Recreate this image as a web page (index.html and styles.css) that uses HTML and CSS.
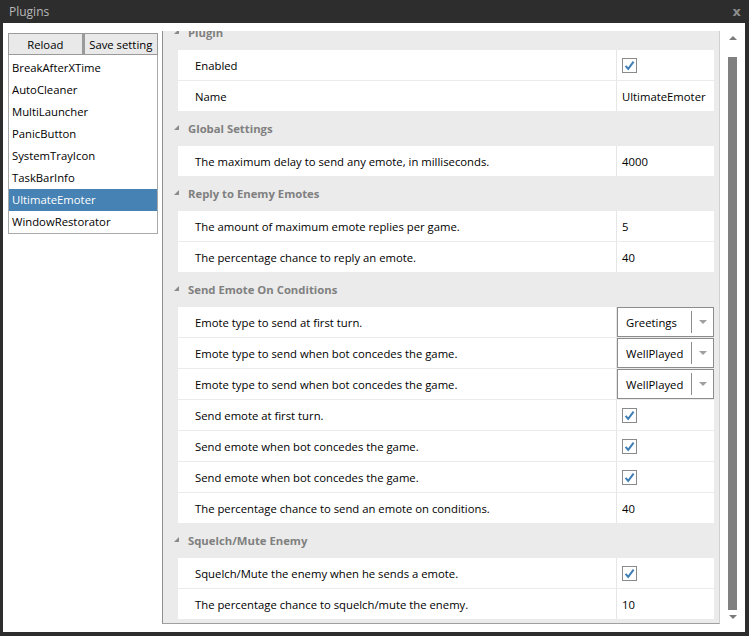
FILE: index.html
```html
<!DOCTYPE html>
<html>
<head>
<meta charset="utf-8">
<link rel="stylesheet" href="styles.css">
</head>
<body>
<div class="window">
  <div class="titlebar">
    <span class="title">Plugins</span>
    <span class="close">x</span>
  </div>
  <div class="client">
    <div class="sidebar">
      <div class="plugin-box">
        <div class="btn-row">
          <button class="btn">Reload</button>
          <button class="btn">Save setting</button>
        </div>
        <ul class="plugin-list">
          <li>BreakAfterXTime</li>
          <li>AutoCleaner</li>
          <li>MultiLauncher</li>
          <li>PanicButton</li>
          <li>SystemTrayIcon</li>
          <li>TaskBarInfo</li>
          <li class="selected">UltimateEmoter</li>
          <li>WindowRestorator</li>
        </ul>
      </div>
    </div>

    <div class="grid">
      <div class="grid-content">
        <div class="group-header"><span class="tri"></span>Plugin</div>
        <div class="rows">
          <div class="prop"><div class="label">Enabled</div><div class="value"><span class="check"><svg viewBox="0 0 15 15" width="15" height="15"><rect x="0.5" y="0.5" width="14" height="14" fill="#fff" stroke="#8a8a8a"/><path d="M3.6 7.8 L6.2 10.8 L11.6 3.6" fill="none" stroke="#3f7fb5" stroke-width="2"/></svg></span></div></div>
          <div class="prop"><div class="label">Name</div><div class="value">UltimateEmoter</div></div>
        </div>

        <div class="group-header"><span class="tri"></span>Global Settings</div>
        <div class="rows">
          <div class="prop"><div class="label">The maximum delay to send any emote, in milliseconds.</div><div class="value">4000</div></div>
        </div>

        <div class="group-header"><span class="tri"></span>Reply to Enemy Emotes</div>
        <div class="rows">
          <div class="prop"><div class="label">The amount of maximum emote replies per game.</div><div class="value">5</div></div>
          <div class="prop"><div class="label">The percentage chance to reply an emote.</div><div class="value">40</div></div>
        </div>

        <div class="group-header"><span class="tri"></span>Send Emote On Conditions</div>
        <div class="rows">
          <div class="prop"><div class="label">Emote type to send at first turn.</div><div class="value dd-cell"><div class="dropdown"><span class="dd-text">Greetings</span><span class="dd-btn"><span class="dd-arrow"></span></span></div></div></div>
          <div class="prop"><div class="label">Emote type to send when bot concedes the game.</div><div class="value dd-cell"><div class="dropdown"><span class="dd-text">WellPlayed</span><span class="dd-btn"><span class="dd-arrow"></span></span></div></div></div>
          <div class="prop"><div class="label">Emote type to send when bot concedes the game.</div><div class="value dd-cell"><div class="dropdown"><span class="dd-text">WellPlayed</span><span class="dd-btn"><span class="dd-arrow"></span></span></div></div></div>
          <div class="prop"><div class="label">Send emote at first turn.</div><div class="value"><span class="check"><svg viewBox="0 0 15 15" width="15" height="15"><rect x="0.5" y="0.5" width="14" height="14" fill="#fff" stroke="#8a8a8a"/><path d="M3.6 7.8 L6.2 10.8 L11.6 3.6" fill="none" stroke="#3f7fb5" stroke-width="2"/></svg></span></div></div>
          <div class="prop"><div class="label">Send emote when bot concedes the game.</div><div class="value"><span class="check"><svg viewBox="0 0 15 15" width="15" height="15"><rect x="0.5" y="0.5" width="14" height="14" fill="#fff" stroke="#8a8a8a"/><path d="M3.6 7.8 L6.2 10.8 L11.6 3.6" fill="none" stroke="#3f7fb5" stroke-width="2"/></svg></span></div></div>
          <div class="prop"><div class="label">Send emote when bot concedes the game.</div><div class="value"><span class="check"><svg viewBox="0 0 15 15" width="15" height="15"><rect x="0.5" y="0.5" width="14" height="14" fill="#fff" stroke="#8a8a8a"/><path d="M3.6 7.8 L6.2 10.8 L11.6 3.6" fill="none" stroke="#3f7fb5" stroke-width="2"/></svg></span></div></div>
          <div class="prop"><div class="label">The percentage chance to send an emote on conditions.</div><div class="value">40</div></div>
        </div>

        <div class="group-header"><span class="tri"></span>Squelch/Mute Enemy</div>
        <div class="rows">
          <div class="prop"><div class="label">Squelch/Mute the enemy when he sends a emote.</div><div class="value"><span class="check"><svg viewBox="0 0 15 15" width="15" height="15"><rect x="0.5" y="0.5" width="14" height="14" fill="#fff" stroke="#8a8a8a"/><path d="M3.6 7.8 L6.2 10.8 L11.6 3.6" fill="none" stroke="#3f7fb5" stroke-width="2"/></svg></span></div></div>
          <div class="prop"><div class="label">The percentage chance to squelch/mute the enemy.</div><div class="value">10</div></div>
        </div>
      </div>
    </div>

    <div class="vscroll">
      <span class="arrow-up"></span>
      <div class="thumb"></div>
      <span class="arrow-down"></span>
    </div>
  </div>
</div>
</body>
</html>
```

FILE: styles.css
```css
* { box-sizing: border-box; }
html, body { margin: 0; padding: 0; }
body {
  width: 749px;
  height: 636px;
  background: #2d2d2d;
  font-family: "Open Sans", "Noto Sans", sans-serif;
  font-size: 11.3px;
  color: #000;
  overflow: hidden;
}
.window {
  width: 749px;
  height: 636px;
  display: flex;
  flex-direction: column;
  background: #2d2d2d;
}
.titlebar {
  height: 23px;
  display: flex;
  align-items: center;
  justify-content: space-between;
  padding: 0 8px 0 9px;
}
.title {
  color: #b9b9b9;
  font-size: 12px;
}
.close {
  color: #8e8e8e;
  font-family: "DejaVu Sans", sans-serif;
  font-weight: bold;
  font-size: 13px;
  line-height: 1;
}
.client {
  height: 609px;
  margin: 0 4px 0 3px;
  background: #fff;
  display: flex;
  padding: 8px 0 8px 5px;
}
.sidebar {
  width: 150px;
  margin-top: 2px;
  margin-right: 4px;
  flex: none;
}
.plugin-box {
  border: 1px solid #a9a9a9;
  border-top: none;
}
.btn-row {
  display: flex;
  height: 22px;
  margin: 0 -1px;
}
.btn {
  flex: 1;
  height: 22px;
  margin: 0;
  padding: 0;
  border: 1px solid #9a9a9a;
  background: #e9e9e9;
  font-family: inherit;
  font-size: 11.3px;
  color: #000;
}
.btn + .btn { border-left-width: 2px; }
.plugin-list {
  list-style: none;
  margin: 0;
  padding: 2px 0 0;
}
.plugin-list li {
  height: 22px;
  line-height: 22px;
  padding-left: 3px;
  white-space: nowrap;
}
.plugin-list li.selected {
  background: #4682b4;
  color: #fff;
}
.grid {
  width: 558px;
  height: 593px;
  flex: none;
  background: #ebebeb;
  border-left: 1px solid #8f8f8f;
  border-right: 1px solid #d0d0d0;
  border-bottom: 1px solid #a0a0a0;
  overflow: hidden;
}
.grid-content {
  margin-top: -16px;
  padding: 0 5px 0 15px;
}
.group-header {
  height: 35px;
  display: flex;
  align-items: center;
  font-weight: bold;
  color: #808080;
  padding-bottom: 1px;
}
.tri {
  width: 0;
  height: 0;
  border-style: solid;
  border-width: 0 0 5px 5px;
  border-color: transparent transparent #8a8a8a transparent;
  margin-left: -4px;
  margin-right: 9px;
  margin-top: -2px;
}
.rows {
  display: flex;
  flex-direction: column;
  gap: 1px;
}
.prop {
  height: 30px;
  display: grid;
  grid-template-columns: 1fr 98px;
  background: #fff;
}
.label {
  padding-left: 17px;
  display: flex;
  align-items: center;
  white-space: nowrap;
}
.value {
  border-left: 1px solid #e6e6e6;
  padding-left: 5px;
  display: flex;
  align-items: center;
  white-space: nowrap;
}
.check { display: flex; }
.dd-cell { padding-left: 0; }
.dropdown {
  width: 100%;
  height: 30px;
  border: 1px solid #8c8c8c;
  display: flex;
  align-items: center;
  background: #fff;
}
.dd-text {
  flex: 1;
  padding-left: 8px;
}
.dd-btn {
  width: 22px;
  height: 22px;
  border-left: 1px solid #8c8c8c;
  display: flex;
  align-items: center;
  justify-content: center;
}
.dd-arrow {
  width: 0;
  height: 0;
  border-style: solid;
  border-width: 4px 4px 0 4px;
  border-color: #a0a0a0 transparent transparent transparent;
  margin-left: 1px;
}
.vscroll {
  width: 25px;
  flex: none;
  display: flex;
  flex-direction: column;
  align-items: center;
}
.arrow-up {
  margin-top: 5px;
  width: 0;
  height: 0;
  border-style: solid;
  border-width: 0 4px 4px 4px;
  border-color: transparent transparent #7a7a7a transparent;
}
.thumb {
  width: 9px;
  height: 553px;
  margin-top: 17px;
  background: #808080;
}
.arrow-down {
  margin-top: 5px;
  width: 0;
  height: 0;
  border-style: solid;
  border-width: 4px 4px 0 4px;
  border-color: #7a7a7a transparent transparent transparent;
}
```
